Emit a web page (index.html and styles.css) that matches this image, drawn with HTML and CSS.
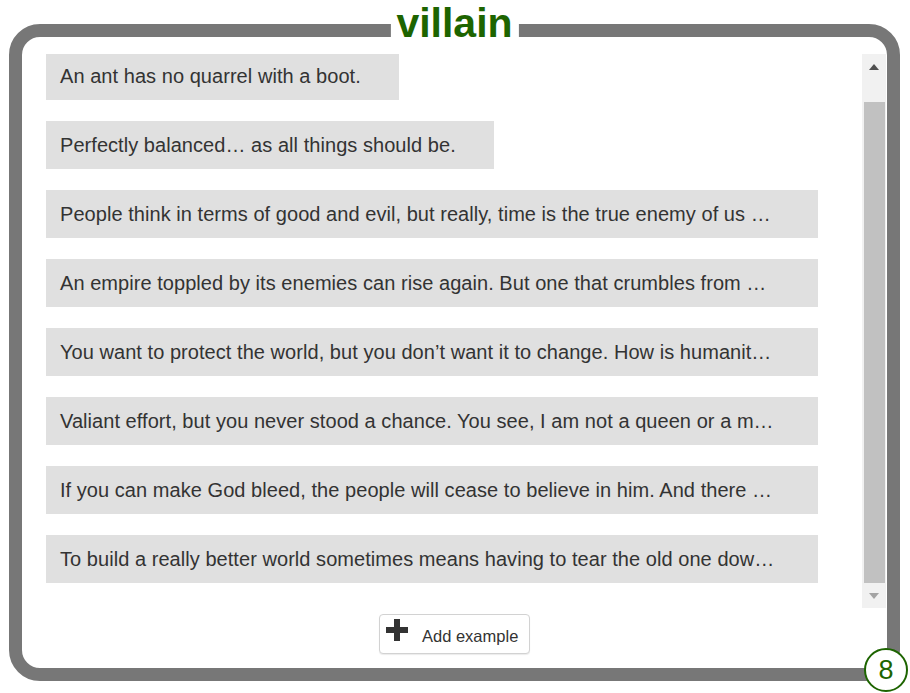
FILE: index.html
```html
<!DOCTYPE html>
<html lang="en">
<head>
<meta charset="utf-8">
<title>villain</title>
<link rel="stylesheet" href="styles.css">
</head>
<body>
<div class="frame">
  <h1 class="title">villain</h1>
  <div class="content">
    <div class="scroller">
      <div class="list">
        <div class="list-inner">
          <div class="item">An ant has no quarrel with a boot.</div>
          <div class="item">Perfectly balanced… as all things should be.</div>
          <div class="item full">People think in terms of good and evil, but really, time is the true enemy of us …</div>
          <div class="item full">An empire toppled by its enemies can rise again. But one that crumbles from …</div>
          <div class="item full">You want to protect the world, but you don’t want it to change. How is humanit…</div>
          <div class="item full">Valiant effort, but you never stood a chance. You see, I am not a queen or a m…</div>
          <div class="item full">If you can make God bleed, the people will cease to believe in him. And there …</div>
          <div class="item full">To build a really better world sometimes means having to tear the old one dow…</div>
        </div>
      </div>
      <div class="scrollbar">
        <div class="sb-btn"><span class="arrow-up"></span></div>
        <div class="thumb"></div>
        <div class="sb-btn"><span class="arrow-down"></span></div>
      </div>
    </div>
    <div class="footer">
      <button class="add-btn" type="button">
        <svg class="plus" width="22" height="22" viewBox="0 0 22 22" aria-hidden="true">
          <rect x="8" y="0" width="6" height="22" fill="#333"/>
          <rect x="0" y="8" width="22" height="6" fill="#333"/>
        </svg>
        <span class="btn-label">Add example</span>
      </button>
    </div>
  </div>
  <div class="badge">8</div>
</div>
</body>
</html>
```

FILE: styles.css
```css
html, body {
  margin: 0;
  padding: 0;
  background: #fff;
}

body {
  font-family: "Liberation Sans", Arial, sans-serif;
  color: #333;
  width: 910px;
  height: 693px;
  overflow: hidden;
}

.frame {
  position: relative;
  box-sizing: border-box;
  margin: 24px 10px 0 9px;
  height: 657px;
  border: 13px solid #777;
  border-radius: 31px;
  display: flex;
  flex-direction: column;
}

.title {
  position: absolute;
  top: -37px;
  left: 50%;
  transform: translateX(-50%);
  margin: 0;
  padding: 0 6px;
  background: #fff;
  color: #1d6400;
  font-size: 41px;
  line-height: 46px;
  font-weight: bold;
}

.content {
  display: flex;
  flex-direction: column;
  padding-top: 17px;
}

.scroller {
  display: flex;
  height: 554px;
  padding: 0 1px 0 24px;
}

.list {
  flex: 1;
  overflow: hidden;
}

.list-inner {
  margin-top: -2px;
  display: flex;
  flex-direction: column;
  align-items: flex-start;
  gap: 21px;
}

.item {
  box-sizing: border-box;
  height: 48px;
  padding: 12px 38px 12px 14px;
  background: #e0e0e0;
  font-size: 20px;
  line-height: 24px;
  letter-spacing: 0.05px;
  color: #333;
  white-space: nowrap;
}

.item.full {
  width: 772px;
  padding-right: 0;
}

.scrollbar {
  width: 24px;
  background: #f1f1f1;
  display: flex;
  flex-direction: column;
}

.sb-btn {
  height: 25px;
  display: flex;
  align-items: center;
  justify-content: center;
}

.arrow-up {
  width: 0;
  height: 0;
  border-left: 5px solid transparent;
  border-right: 5px solid transparent;
  border-bottom: 6px solid #505050;
}

.arrow-down {
  width: 0;
  height: 0;
  border-left: 5px solid transparent;
  border-right: 5px solid transparent;
  border-top: 6px solid #a3a3a3;
}

.thumb {
  margin: auto 1px 0 2px;
  height: 481px;
  background: #c1c1c1;
}

.footer {
  display: flex;
  justify-content: center;
  padding-top: 6px;
}

.add-btn {
  box-sizing: border-box;
  width: 151px;
  height: 40px;
  display: flex;
  align-items: center;
  gap: 14px;
  padding: 0 0 0 6px;
  background: #fff;
  border: 1px solid #d2d2d2;
  border-radius: 4px;
  box-shadow: 0 1px 1px rgba(0, 0, 0, 0.08);
  font-family: "Liberation Sans", Arial, sans-serif;
  font-size: 16.5px;
  color: #333;
}

.plus {
  display: block;
  margin-top: -8px;
}

.btn-label {
  margin-top: 4px;
}

.badge {
  position: absolute;
  right: -21px;
  bottom: -24px;
  box-sizing: border-box;
  width: 44px;
  height: 44px;
  border: 2px solid #1d6400;
  border-radius: 50%;
  background: #fff;
  color: #1d6400;
  font-size: 27px;
  line-height: 40px;
  text-align: center;
}
```
